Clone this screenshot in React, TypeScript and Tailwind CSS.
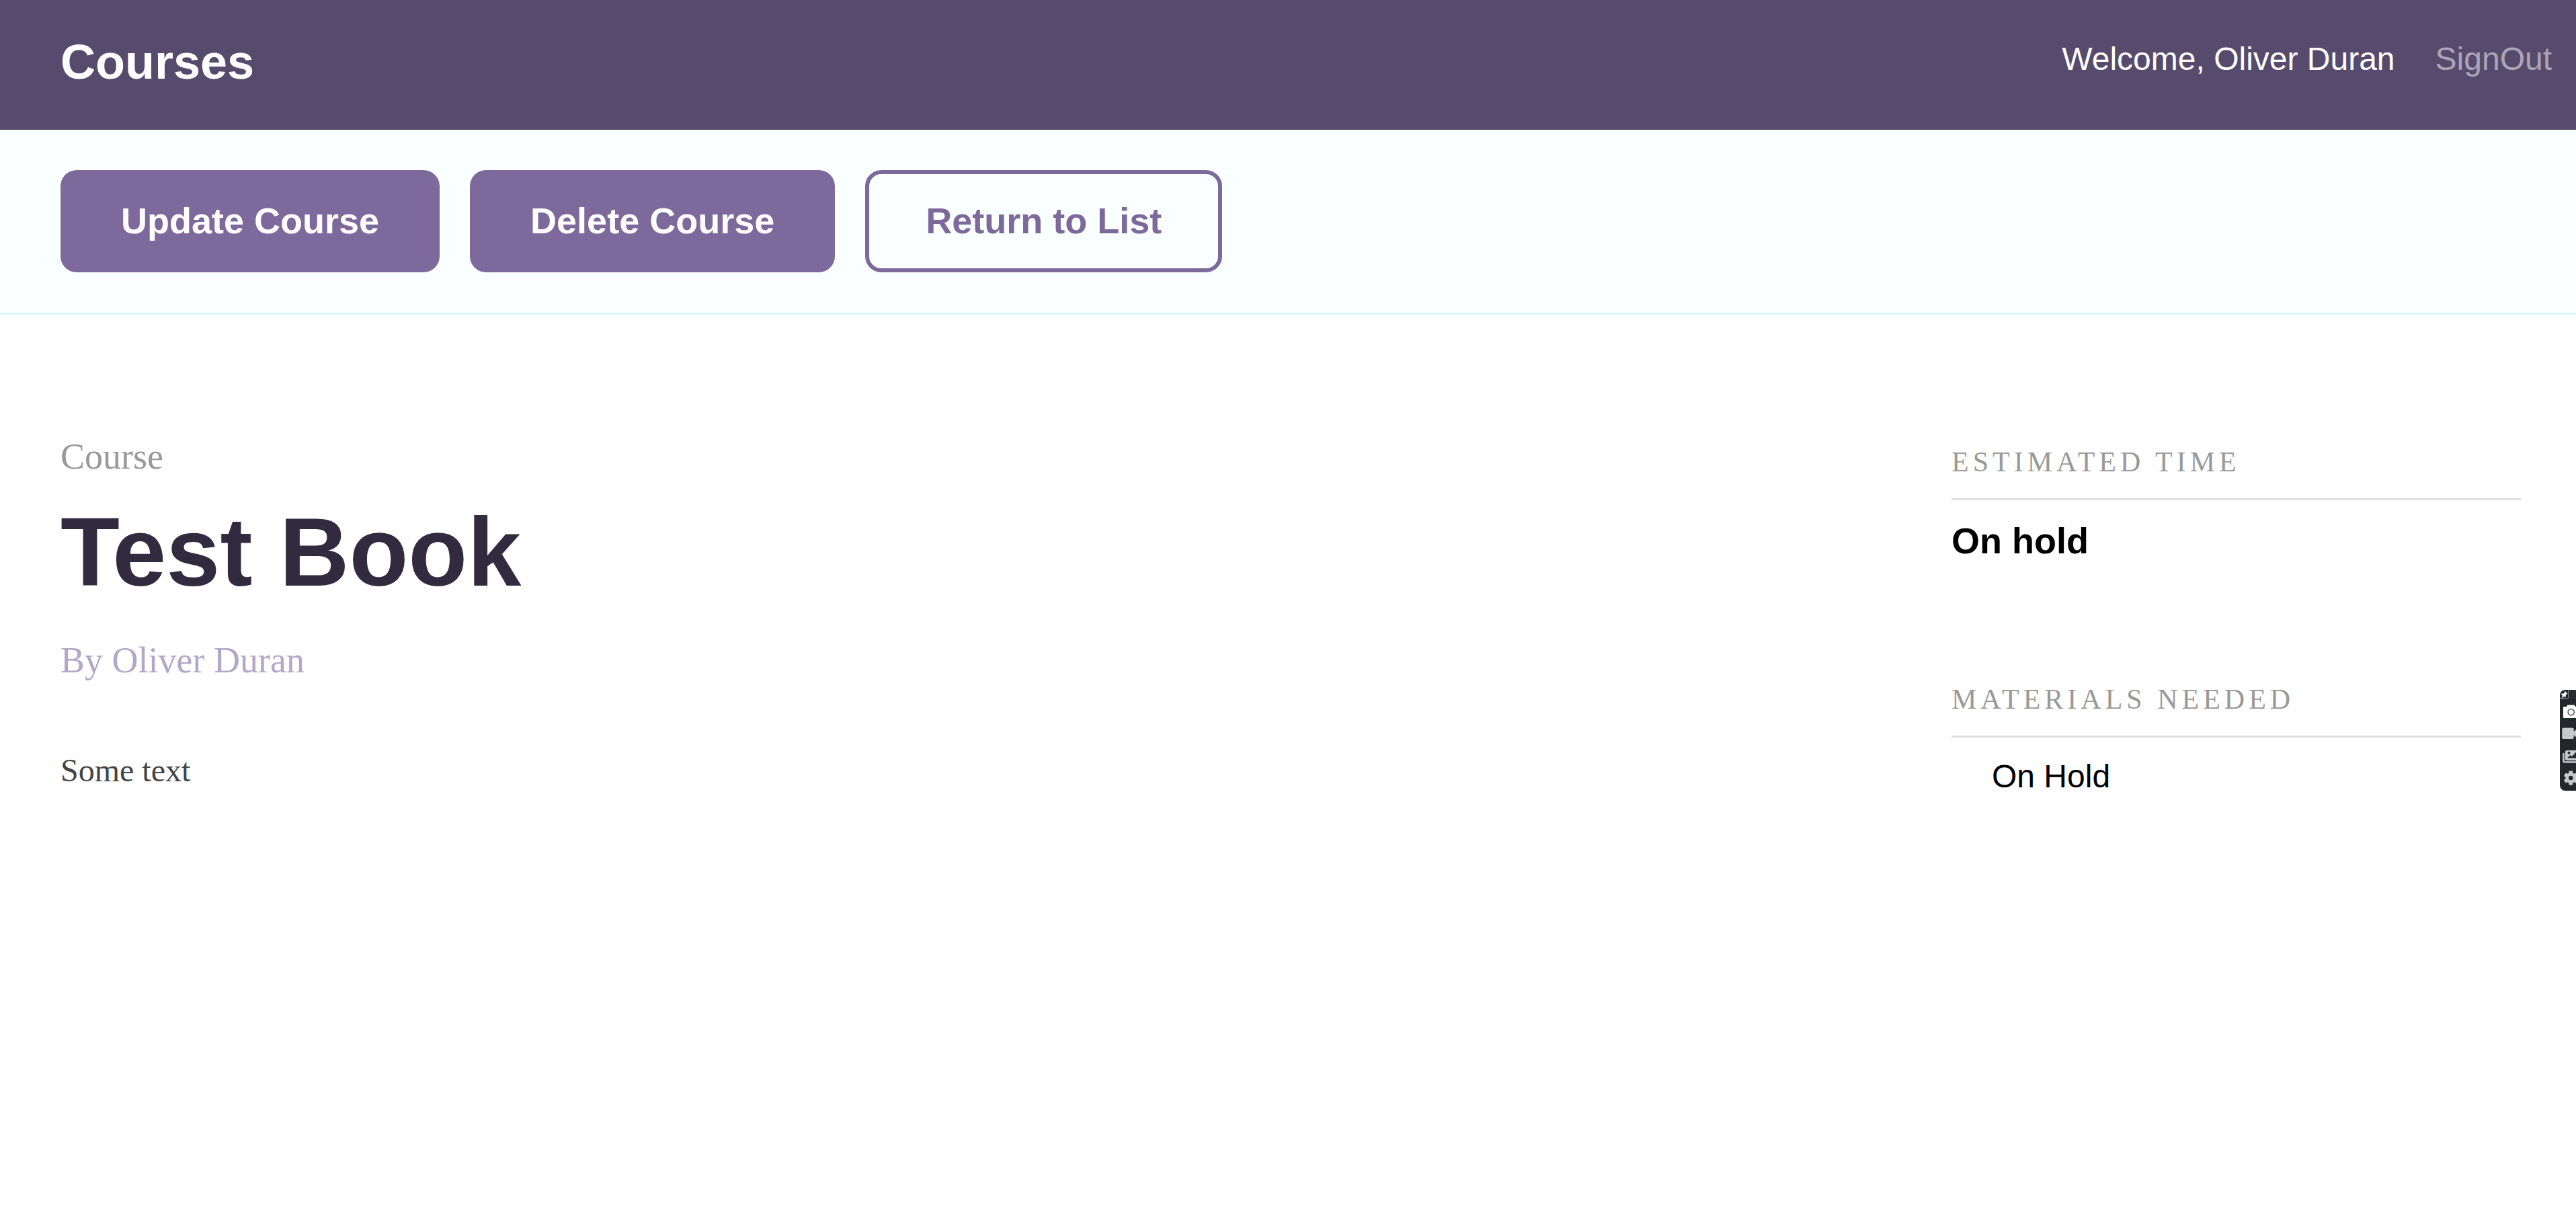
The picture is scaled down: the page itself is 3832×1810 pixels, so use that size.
import React from "react";

function PinIcon() {
  return (
    <svg width="24" height="14" viewBox="0 0 24 14" aria-hidden="true" className="block">
      <path d="M0 12.500h12.500V0" fill="none" stroke="#8c8f92" />
      <path d="M7.500 1.500l4 4.500-1.500.5-1 .5-.500 3.500-1 .5-1.500-1.500L3 12.500l-.5-.5L4 8.500 2 7l.5-1.500 3.500 0 1-1.500z" fill="#fff" />
      <g fill="#34383d">
        <circle cx="16" cy="3" r="1.500" />
        <circle cx="22" cy="3" r="1.500" />
        <circle cx="19" cy="7" r="1.500" />
        <circle cx="16" cy="12" r="1.500" />
        <circle cx="22" cy="12" r="1.500" />
      </g>
    </svg>
  );
}

function CameraIcon() {
  return (
    <svg width="24" height="20" viewBox="0 0 24 20" aria-hidden="true" className="block">
      <path d="M6 3h4l1.500-2.500h10L23 3h3v17H6a1 1 0 0 1-1-1V4a1 1 0 0 1 1-1z" fill="#fff" />
      <circle cx="16.700" cy="11" r="4.600" fill="#fff" stroke="#23272c" strokeWidth="1.300" />
    </svg>
  );
}

function VideoIcon() {
  return (
    <svg width="24" height="18" viewBox="0 0 24 18" aria-hidden="true" className="block">
      <path d="M5 0.500h14a1.700 1.700 0 0 1 1.700 1.700v4l4.500-4v13l-4.500-4v4a1.700 1.700 0 0 1-1.700 1.700H5a1.700 1.700 0 0 1-1.700-1.700V2.200A1.700 1.700 0 0 1 5 0.500z" fill="#c9c9c9" />
    </svg>
  );
}

function GalleryIcon() {
  return (
    <svg width="24" height="20" viewBox="0 0 24 20" aria-hidden="true" className="block">
      <path d="M5.500 5v11.500a2 2 0 0 0 2 2H24" fill="none" stroke="#c9c9c9" strokeWidth="2.600" />
      <path d="M24 1.500H10a1.500 1.500 0 0 0-1.500 1.500v11a1.500 1.500 0 0 0 1.500 1.500h14z" fill="#c9c9c9" stroke="#c9c9c9" />
      <circle cx="13.500" cy="4.800" r="2" fill="#23272c" />
      <path d="M11 12.500l4.500-4.500 2.500 2 6-6.500v9z" fill="#23272c" />
    </svg>
  );
}

function GearIcon() {
  return (
    <svg width="24" height="22" viewBox="0 0 24 22" aria-hidden="true" className="block">
      <path
        transform="translate(3.200 -2) scale(1.090)"
        d="M19.140 12.940c.04-.3.060-.610.060-.940s-.020-.640-.070-.940l2.030-1.580a.49.49 0 0 0 .12-.610l-1.920-3.320a.488.488 0 0 0-.590-.220l-2.390.960c-.5-.380-1.030-.7-1.620-.940l-.360-2.540a.484.484 0 0 0-.480-.410h-3.840c-.24 0-.43.170-.470.410l-.360 2.540c-.590.240-1.130.570-1.620.940l-2.390-.960c-.22-.080-.470 0-.590.220L2.740 8.870c-.12.210-.080.470.120.610l2.030 1.580c-.050.3-.090.630-.090.940s.020.640.070.940l-2.030 1.580a.49.49 0 0 0-.120.610l1.920 3.320c.12.220.370.290.590.220l2.390-.960c.5.380 1.030.7 1.620.940l.360 2.540c.050.240.240.410.480.410h3.840c.24 0 .440-.170.470-.410l.360-2.540c.590-.240 1.130-.560 1.620-.940l2.390.960c.22.080.470 0 .590-.220l1.920-3.320c.12-.220.070-.470-.120-.610l-2.010-1.580zM12 15a3 3 0 1 1 0-6 3 3 0 0 1 0 6z"
        fill="#c9c9c9"
      />
    </svg>
  );
}

const filled = "rounded-[24px] bg-[#7d699b] px-[90px] pt-[39px] pb-[41px] text-[54px] leading-[72px] font-bold text-white";

export default function App() {
  return (
    <div className="min-h-screen bg-white font-['Liberation_Sans',Arial,sans-serif]">
      <header className="flex items-start justify-between bg-[#574b6d] pt-11 pr-9 pb-[53px] pl-[90px] text-white">
        <h1 className="text-[72px] leading-[96px] font-bold">
          <a href="#courses">Courses</a>
        </h1>
        <nav className="flex gap-[60px] text-[48px] leading-[87px]">
          <span>Welcome, Oliver Duran</span>
          <a href="#signout" className="text-[#aba5b6]">SignOut</a>
        </nav>
      </header>

      <div className="flex gap-[45px] border-b-[3px] border-[#d8f9fb] bg-[#faffff] px-[90px] py-[60px]">
        <button type="button" className={filled}>Update Course</button>
        <button type="button" className={filled}>Delete Course</button>
        <button
          type="button"
          className="rounded-[24px] border-[6px] border-[#7d699b] px-[84px] pt-[33px] pb-[35px] text-[54px] leading-[72px] font-bold text-[#7d699b]"
        >
          Return to List
        </button>
      </div>

      <main className="flex justify-between pt-[175px] pr-[82px] pl-[90px]">
        <section className="font-['Liberation_Serif','Times_New_Roman',serif]">
          <p className="text-[54px] leading-[72px] text-[#999999]">Course</p>
          <h2 className="mt-[35px] font-['Liberation_Sans',Arial,sans-serif] text-[144px] leading-[144px] font-bold text-[#322a3f]">
            Test Book
          </h2>
          <p className="mt-[52px] text-[54px] leading-[72px] text-[#b1a7c6]">By Oliver Duran</p>
          <p className="mt-[92px] text-[48px] leading-[72px] text-[#444444]">Some text</p>
        </section>

        <aside className="w-[847px] shrink-0 pt-[14px] text-black">
          <h3 className="border-b-[3px] border-[#dddddd] pb-6 font-['Liberation_Serif','Times_New_Roman',serif] text-[42px] leading-[60px] tracking-[6px] text-[#999999] uppercase">
            Estimated Time
          </h3>
          <p className="mt-6 text-[54px] leading-[72px] font-bold">On hold</p>
          <h3 className="mt-[170px] border-b-[3px] border-[#dddddd] pb-6 font-['Liberation_Serif','Times_New_Roman',serif] text-[42px] leading-[60px] tracking-[6px] text-[#999999] uppercase">
            Materials Needed
          </h3>
          <ul className="mt-[22px] pl-[60px] text-[48px] leading-[72px]">
            <li>On Hold</li>
          </ul>
        </aside>
      </main>

      <div className="fixed top-[1026px] right-0 w-6 overflow-hidden rounded-l-lg bg-[#23272c] pb-2">
        <button type="button" aria-label="Pin" className="block"><PinIcon /></button>
        <button type="button" aria-label="Screenshot" className="mt-2 block"><CameraIcon /></button>
        <button type="button" aria-label="Record" className="mt-[14px] block"><VideoIcon /></button>
        <button type="button" aria-label="Gallery" className="mt-[15px] block"><GalleryIcon /></button>
        <button type="button" aria-label="Settings" className="mt-[11px] block"><GearIcon /></button>
      </div>
    </div>
  );
}
